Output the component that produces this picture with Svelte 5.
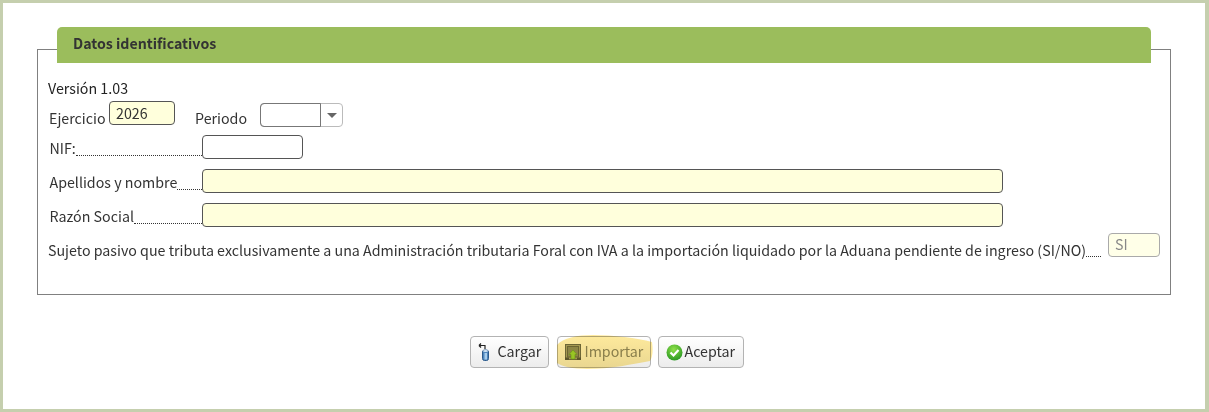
<script lang="ts">
	let ejercicio = $state('2026');
	let nif = $state('');
	let nombre = $state('');
	let razon = $state('');
</script>

<div class="page">
	<fieldset class="box">
		<div class="title">Datos identificativos</div>

		<div class="version">Versión 1.03</div>

		<div class="row-ejercicio">
			<span class="lbl-ej">Ejercicio</span>
			<input class="inp req ej" bind:value={ejercicio} />
			<span class="lbl-per">Periodo</span>
			<div class="combo">
				<span class="combo-val"></span>
				<span class="combo-btn"><i class="arrow"></i></span>
			</div>
		</div>

		<div class="row nif">
			<div class="field">
				<span class="lbl">NIF:</span>
				<span class="dots"></span>
			</div>
			<input class="inp short" bind:value={nif} />
		</div>
		<div class="row ape">
			<div class="field">
				<span class="lbl">Apellidos y nombre</span>
				<span class="dots"></span>
			</div>
			<input class="inp req long" bind:value={nombre} />
		</div>
		<div class="row raz">
			<div class="field">
				<span class="lbl">Razón Social</span>
				<span class="dots"></span>
			</div>
			<input class="inp req long" bind:value={razon} />
		</div>

		<div class="row-sujeto">
			<span class="lbl-suj">Sujeto pasivo que tributa exclusivamente a una Administración tributaria Foral con IVA a la importación liquidado por la Aduana pendiente de ingreso (SI/NO)</span>
			<span class="dots small"></span>
			<input class="inp si" value="SI" disabled />
		</div>
	</fieldset>

	<div class="buttons">
		<button class="btn cargar">
			<svg width="14" height="18" viewBox="0 0 14 18">
				<path d="M1 2.500h6V6M1 2.500l2-2M1 2.500l2 2" fill="none" stroke="#222" stroke-width="1.200" />
				<rect x="4.500" y="7" width="6" height="10.500" rx="2" fill="#4f86bd" stroke="#2c5a8c" />
				<ellipse cx="7.500" cy="8" rx="2.500" ry="1" fill="#d5e6f5" />
				<rect x="6.500" y="10" width="2.500" height="6.500" fill="#a8cdec" />
			</svg>
			<span class="t1">Cargar</span>
		</button>
		<button class="btn importar">
			<svg width="16" height="16" viewBox="0 0 16 16">
				<rect x="0.500" y="0.500" width="15" height="15" fill="#a5a684" stroke="#6e6f56" />
				<rect x="2.500" y="2.500" width="11" height="10.500" fill="#8e9270" stroke="#6d6d52" />
				<path d="M8 6l4 4.500H10V15H6v-4.500H4z" fill="#9ad83a" stroke="#6a9f24" stroke-width="0.600" />
				<rect x="0" y="13.500" width="4" height="2.500" fill="#5c5c44" />
				<rect x="12" y="13.500" width="4" height="2.500" fill="#5c5c44" />
			</svg>
			<span class="t2">Importar</span>
		</button>
		<button class="btn aceptar">
			<svg width="17" height="17" viewBox="0 0 17 17">
				<defs>
					<radialGradient id="ok" cx="0.450" cy="0.300" r="0.800">
						<stop offset="0" stop-color="#8fe04a" />
						<stop offset="1" stop-color="#1c8f1c" />
					</radialGradient>
				</defs>
				<circle cx="8.500" cy="8.500" r="8" fill="url(#ok)" />
				<path d="M4.500 8.500l3 3 5-5.500" fill="none" stroke="#fff" stroke-width="2.200" />
			</svg>
			<span class="t3">Aceptar</span>
		</button>
		<svg class="marker" width="100" height="38" viewBox="0 0 100 38">
			<path d="M2 12C8 5 22 2 38 2 58 2 82 5 97 9 98 16 98 24 95 28 78 31 56 36 32 36 18 36 6 33 2 30z" fill="#fde99c" />
		</svg>
	</div>
</div>

<style>
	:global(body) {
		margin: 0;
		background: #fff;
	}
	.page {
		box-sizing: border-box;
		width: 1209px;
		height: 412px;
		border: solid #c5cfae;
		border-width: 3px 4px 3px 3px;
		padding: 46px 34px 0;
		font-family: 'Noto Sans CJK SC', 'Noto Sans', sans-serif;
		font-size: 14.24px;
		color: #333;
		overflow: hidden;
	}
	.box {
		box-sizing: border-box;
		width: 1134px;
		height: 246px;
		margin: 0;
		padding: 0;
		border: 1px solid #808080;
		min-width: 0;
	}
	.title {
		box-sizing: border-box;
		margin: -23px 19px 0;
		height: 36px;
		padding: 6px 16px;
		background: #9bbd5c;
		border-radius: 5px 5px 0 0;
		font-weight: 700;
		font-size: 14.2px;
		line-height: 20px;
		color: #333;
	}
	.version {
		margin: 14px 0 0 10px;
		height: 22px;
		line-height: 22px;
		color: #222;
	}
	.inp {
		box-sizing: border-box;
		flex: none;
		border: 1px solid #555;
		border-radius: 4px;
		height: 24px;
		background: #fff;
		font: inherit;
		color: #333;
		padding: 0 6px 2px;
		outline: none;
		margin: 0;
	}
	.req {
		background: #ffffdc;
	}
	.row-ejercicio {
		display: flex;
		align-items: flex-start;
		margin: 2px 0 0 11px;
		height: 26px;
	}
	.lbl-ej {
		line-height: 24px;
		margin-top: 5px;
		width: 60px;
	}
	.ej {
		width: 66px;
	}
	.lbl-per {
		line-height: 24px;
		margin: 5px 0 0 20px;
		width: 65px;
	}
	.combo {
		display: flex;
		box-sizing: border-box;
		width: 83px;
		height: 24px;
		margin-top: 2px;
		border: 1px solid #bbb;
		border-radius: 4px;
		background: #fff;
	}
	.combo-val {
		width: 59px;
		margin: -1px 0 -1px -1px;
		border: 1px solid #777;
		border-radius: 4px 0 0 4px;
	}
	.combo-btn {
		flex: 1;
		display: flex;
		align-items: center;
		justify-content: center;
	}
	.arrow {
		width: 0;
		height: 0;
		border: solid transparent;
		border-width: 5px 5px 0;
		border-top-color: #666;
	}
	.row {
		display: flex;
		align-items: flex-end;
		height: 24px;
		margin-left: 11.5px;
	}
	.field {
		display: flex;
		align-items: flex-end;
		width: 152.5px;
		flex: none;
	}
	.nif {
		margin-top: 8px;
	}
	.ape {
		margin-top: 10px;
	}
	.raz {
		margin-top: 10px;
	}
	.lbl {
		line-height: 24px;
		margin-bottom: -1px;
		white-space: nowrap;
	}
	.dots {
		flex: 1;
		height: 0;
		border-bottom: 1px dotted #333;
		margin-bottom: 3px;
	}
	.short {
		width: 101px;
	}
	.long {
		width: 801px;
	}
	.row-sujeto {
		display: flex;
		align-items: flex-start;
		margin: 6px 0 0 10px;
	}
	.lbl-suj {
		line-height: 24px;
		margin-top: 5px;
		white-space: nowrap;
	}
	.dots.small {
		flex: none;
		width: 15px;
		margin: 23px 0 0 0;
	}
	.si {
		width: 52px;
		margin-left: 7px;
		background: #ffffe8;
		border-color: #aaa;
		color: #888;
		padding-bottom: 4px;
	}
	.buttons {
		position: relative;
		display: flex;
		justify-content: center;
		gap: 7px;
		margin-top: 41px;
		padding-left: 5px;
	}
	.btn {
		box-sizing: border-box;
		height: 32px;
		display: flex;
		align-items: center;
		padding: 0 7px;
		border: 1px solid #b3b3b3;
		border-radius: 4px;
		background: linear-gradient(#ffffff, #ececec);
		font: inherit;
		color: #333;
		white-space: nowrap;
	}
	.btn svg {
		flex: none;
	}
	.cargar {
		width: 79px;
		margin-right: 1px;
	}
	.t1 {
		margin-left: 6px;
	}
	.importar {
		width: 94px;
		color: #8a8a7a;
	}
	.t2 {
		margin-left: 4px;
	}
	.aceptar {
		width: 86px;
	}
	.t3 {
		margin-left: 2px;
	}
	.btn span {
		margin-bottom: 3px;
	}
	.marker {
		position: absolute;
		left: 518px;
		top: -3px;
		mix-blend-mode: multiply;
		pointer-events: none;
	}
</style>
